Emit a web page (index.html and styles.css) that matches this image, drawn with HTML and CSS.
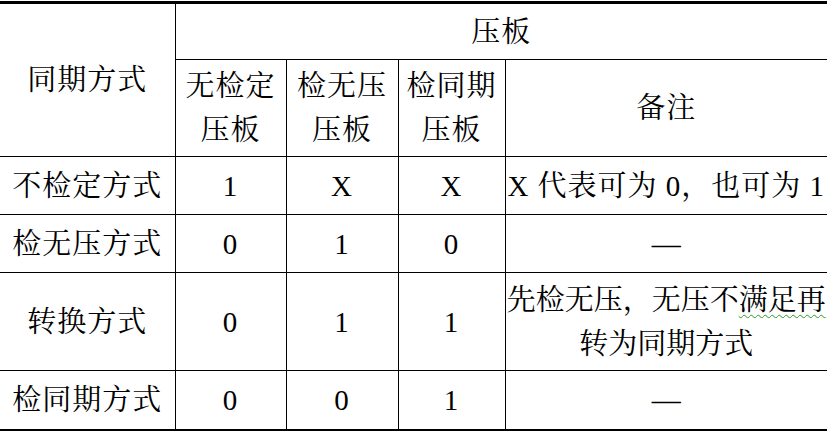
FILE: index.html
```html
<!DOCTYPE html>
<html lang="zh-CN">
<head>
<meta charset="utf-8">
<title>同期方式</title>
<link rel="stylesheet" href="styles.css">
</head>
<body>
<table class="grid">
  <colgroup>
    <col class="c-mode">
    <col class="c-a">
    <col class="c-b">
    <col class="c-c">
    <col class="c-note">
  </colgroup>
  <tr class="r-h1">
    <td rowspan="2">同期方式</td>
    <td colspan="4">压板</td>
  </tr>
  <tr class="r-h2">
    <td>无检定压板</td>
    <td>检无压压板</td>
    <td>检同期压板</td>
    <td>备注</td>
  </tr>
  <tr class="r-s">
    <td>不检定方式</td>
    <td>1</td>
    <td>X</td>
    <td>X</td>
    <td class="note wide">X 代表可为 0，也可为 1</td>
  </tr>
  <tr class="r-s">
    <td>检无压方式</td>
    <td>0</td>
    <td>1</td>
    <td>0</td>
    <td class="note">—</td>
  </tr>
  <tr class="r-d">
    <td>转换方式</td>
    <td>0</td>
    <td>1</td>
    <td>1</td>
    <td class="note">先检无压，无压不<span class="squiggle">满足再</span><br>转为同期方式</td>
  </tr>
  <tr class="r-l">
    <td>检同期方式</td>
    <td>0</td>
    <td>0</td>
    <td>1</td>
    <td class="note">—</td>
  </tr>
</table>
</body>
</html>
```

FILE: styles.css
```css
html, body {
  margin: 0;
  padding: 0;
  background: #fff;
}

body {
  padding-top: 1px;
}

.grid {
  border-collapse: collapse;
  table-layout: fixed;
  width: 827px;
  font-family: "Liberation Serif", "Noto Serif CJK SC", "Noto Sans CJK SC", serif;
  font-size: 29px;
  line-height: 44px;
  letter-spacing: 1px;
  color: #000;
  border-top: 3px solid #000;
  border-bottom: 2px solid #000;
}

.grid td {
  border: 1px solid #000;
  text-align: center;
  vertical-align: middle;
  padding: 0 2px;
}

.grid tr td:first-child {
  border-left: none;
}

.grid tr td:last-child {
  border-right: none;
}

.grid tr.r-h1 td:first-child {
  border-right: 1px solid #000;
}

.grid tr.r-h1 td {
  border-top: 3px solid #000;
}

.grid tr.r-l td {
  border-bottom: 2px solid #000;
}

.c-mode { width: 175px; }
.c-a { width: 111px; }
.c-b { width: 112px; }
.c-c { width: 107px; }
.c-note { width: 322px; }

.r-h1 { height: 57px; }
.r-h2 { height: 97px; }
.r-s { height: 58px; }
.r-d { height: 98px; }
.r-l { height: 59px; }

.grid td.note {
  white-space: nowrap;
  letter-spacing: 0;
  padding: 0;
}

.grid td.note.wide {
  letter-spacing: 1px;
}

.squiggle {
  text-decoration: underline wavy #2a9a2a;
  text-decoration-thickness: 1px;
  text-underline-offset: 4px;
}
```
